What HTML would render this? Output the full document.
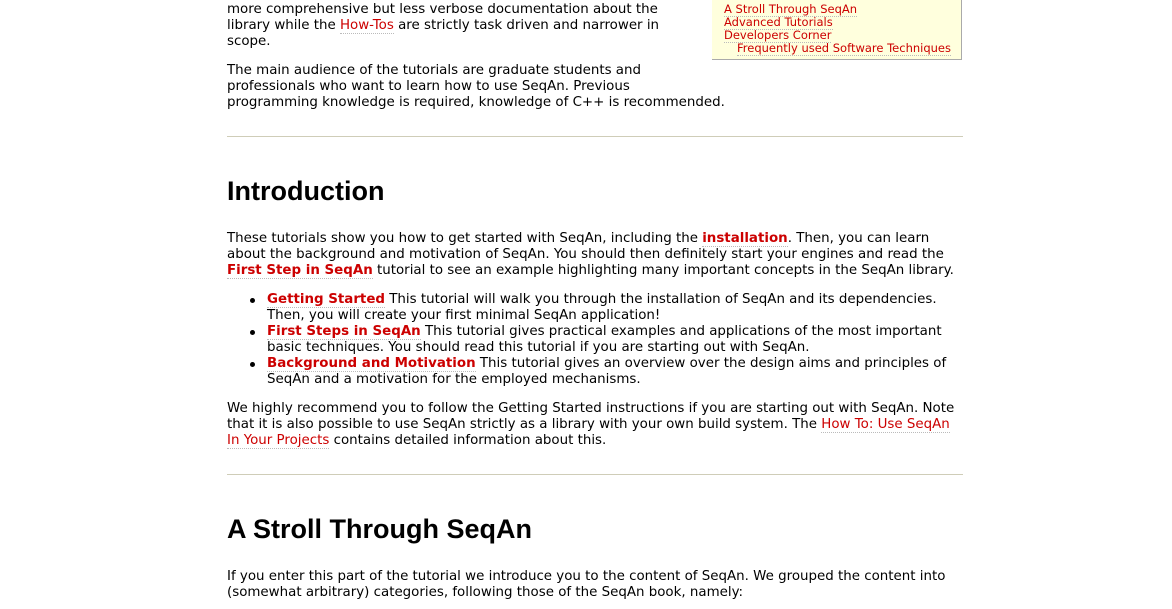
<!DOCTYPE html>
<html><head><meta charset="utf-8"><style>
body{margin:0;width:1172px;height:609px;overflow:hidden;background:#fff;font-family:"DejaVu Sans",Verdana,sans-serif;font-size:13.4px;color:#000;position:relative}
.l{position:absolute;left:227px;white-space:nowrap;line-height:16px}
a{color:#c00;text-decoration:none;border-bottom:1px dotted #bbb}
.b{font-weight:bold;color:#c00;border-bottom:1px dotted #bbb}
h2{position:absolute;left:227px;margin:0;font-family:"Liberation Sans",Arial,sans-serif;font-weight:bold;font-size:27px;line-height:32px;white-space:nowrap}
.hr{position:absolute;left:227px;width:736px;height:1px;background:#cfcdb8}
.box{position:absolute;left:712px;top:-5px;width:249px;height:64px;background:#ffffdd;border-right:1px solid #aaa;border-bottom:1px solid #aaa;font-size:11.5px}
.box div{position:absolute;left:12px;white-space:nowrap;line-height:13px}
.dot{position:absolute;left:250px;width:5px;height:5px;border-radius:50%;background:#000}
</style></head><body>
<div class="box">
<div style="top:8px"><a>A Stroll Through SeqAn</a></div>
<div style="top:21px"><a>Advanced Tutorials</a></div>
<div style="top:34px"><a>Developers Corner</a></div>
<div style="top:47px;left:25px"><a>Frequently used Software Techniques</a></div>
</div>
<div class="l" style="top:2px">more comprehensive but less verbose documentation about the</div>
<div class="l" style="top:18px">library while the <a>How-Tos</a> are strictly task driven and narrower in</div>
<div class="l" style="top:34px">scope.</div>
<div class="l" style="top:63px">The main audience of the tutorials are graduate students and</div>
<div class="l" style="top:79px">professionals who want to learn how to use SeqAn. Previous</div>
<div class="l" style="top:95px">programming knowledge is required, knowledge of C++ is recommended.</div>
<div class="hr" style="top:136px"></div>
<h2 style="top:175px">Introduction</h2>
<div class="l" style="top:231px">These tutorials show you how to get started with SeqAn, including the <span class="b">installation</span>. Then, you can learn</div>
<div class="l" style="top:247px">about the background and motivation of SeqAn. You should then definitely start your engines and read the</div>
<div class="l" style="top:263px"><span class="b">First Step in SeqAn</span> tutorial to see an example highlighting many important concepts in the SeqAn library.</div>
<div class="dot" style="top:298px"></div>
<div class="l" style="top:292px;left:267px"><span class="b">Getting Started</span> This tutorial will walk you through the installation of SeqAn and its dependencies.</div>
<div class="l" style="top:308px;left:267px">Then, you will create your first minimal SeqAn application!</div>
<div class="dot" style="top:330px"></div>
<div class="l" style="top:324px;left:267px"><span class="b">First Steps in SeqAn</span> This tutorial gives practical examples and applications of the most important</div>
<div class="l" style="top:340px;left:267px">basic techniques. You should read this tutorial if you are starting out with SeqAn.</div>
<div class="dot" style="top:362px"></div>
<div class="l" style="top:356px;left:267px"><span class="b">Background and Motivation</span> This tutorial gives an overview over the design aims and principles of</div>
<div class="l" style="top:372px;left:267px">SeqAn and a motivation for the employed mechanisms.</div>
<div class="l" style="top:401px">We highly recommend you to follow the Getting Started instructions if you are starting out with SeqAn. Note</div>
<div class="l" style="top:417px">that it is also possible to use SeqAn strictly as a library with your own build system. The <a>How To: Use SeqAn</a></div>
<div class="l" style="top:433px"><a>In Your Projects</a> contains detailed information about this.</div>
<div class="hr" style="top:474px"></div>
<h2 style="top:513px">A Stroll Through SeqAn</h2>
<div class="l" style="top:569px">If you enter this part of the tutorial we introduce you to the content of SeqAn. We grouped the content into</div>
<div class="l" style="top:585px">(somewhat arbitrary) categories, following those of the SeqAn book, namely:</div>
</body></html>
